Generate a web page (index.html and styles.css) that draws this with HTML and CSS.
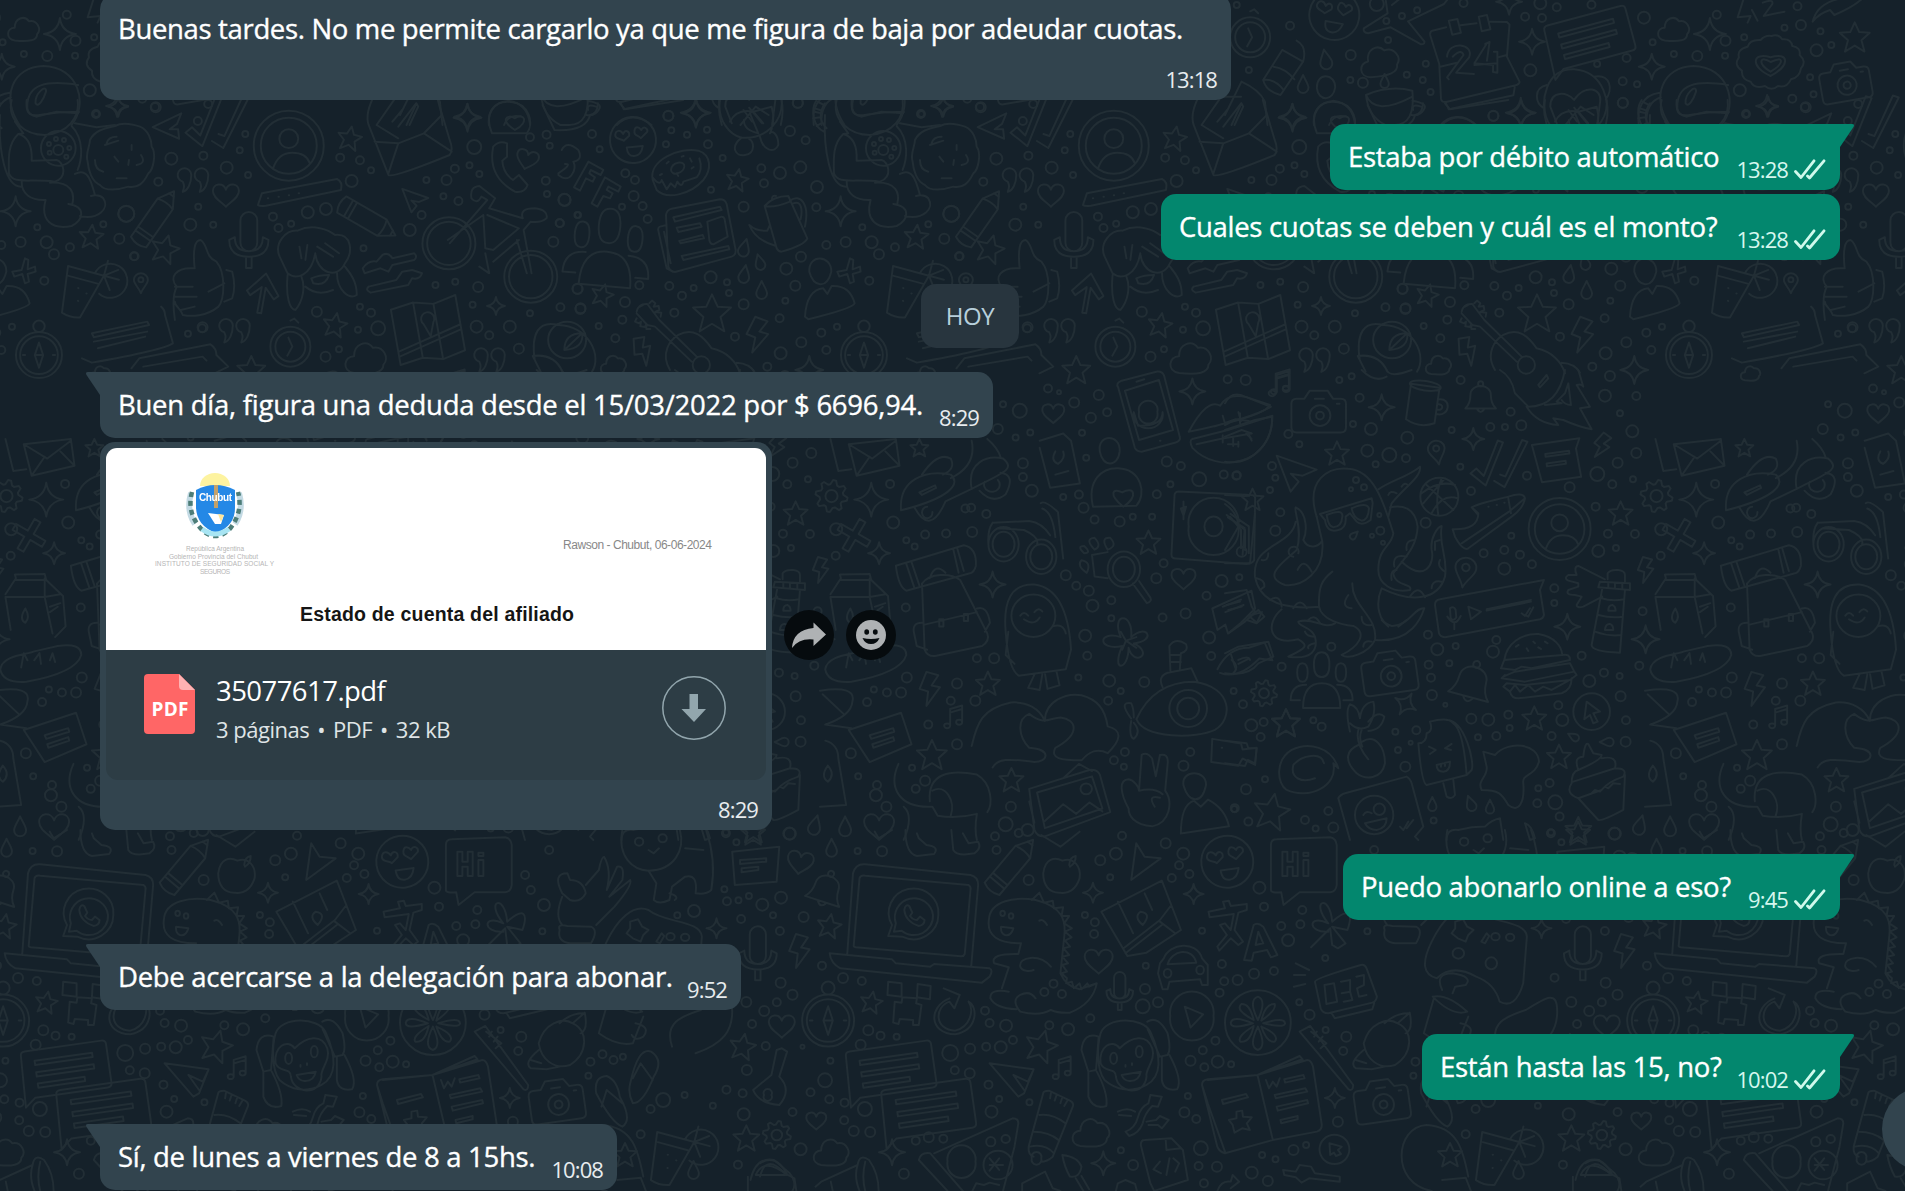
FILE: index.html
```html
<!DOCTYPE html>
<html lang="es">
<head>
<meta charset="utf-8">
<title>Chat</title>
<link rel="stylesheet" href="styles.css">
</head>
<body>
<svg class="wallpaper" id="wallpaper" viewBox="0 0 1905 1191" aria-hidden="true"></svg>
<svg class="defs" aria-hidden="true">
  <symbol id="checks" viewBox="0 0 32 21"><path d="M1.5 12.5 7 18.5 20 1.8M13.5 17 15.5 19 30 1.8" fill="none" stroke="currentColor" stroke-width="2.8" stroke-linecap="round" stroke-linejoin="round"/></symbol>
  <symbol id="tail" viewBox="0 0 14 23"><path d="M14 0H2Q-1 0 .5 3L14 23z" fill="currentColor"/></symbol>
</svg>
<main class="chat">
  <div class="bubble in first w1"><p class="text">Buenas tardes. No me permite cargarlo ya que me figura de baja por adeudar cuotas.</p><span class="time">13:18</span></div>
  <div class="bubble out start w2"><svg class="tail"><use href="#tail"/></svg><p class="text">Estaba por débito automático</p><span class="time">13:28</span><svg class="checks"><use href="#checks"/></svg></div>
  <div class="bubble out w3"><p class="text">Cuales cuotas se deben y cuál es el monto?</p><span class="time">13:28</span><svg class="checks"><use href="#checks"/></svg></div>
  <div class="day">HOY</div>
  <div class="bubble in start w4"><svg class="tail"><use href="#tail"/></svg><p class="text">Buen día, figura una deduda desde el 15/03/2022 por $ 6696,94.</p><span class="time">8:29</span></div>
  <div class="doc-row">
    <article class="doc">
      <svg class="preview" viewBox="0 0 660 202">
        <g class="emblem" transform="translate(109 60)">
          <path d="M-15-22a15 13 0 0 1 30 0z" fill="#fdf3a0"/>
          <path d="M-24-15q-5 18 4 31M24-15q5 18-4 31" fill="none" stroke="#c3dae4" stroke-width="6"/>
          <path d="M-23-16q-5 18 6 33 8 11 17 11 10 0 17-10 11-16 6-34" fill="none" stroke="#4d7d78" stroke-width="4.500" stroke-dasharray="5 4"/>
          <path d="M-19-18Q0-28 20-18V0Q20 18 1 25-18 18-19 0z" fill="#2488e6"/>
          <path d="M-13 21Q0 31 14 21" fill="none" stroke="#a8e5f3" stroke-width="5"/>
          <path d="M1-23V0" stroke="#c2a16b" stroke-width="4"/>
          <text x="-16" y="-7" class="crest" textLength="33">Chubut</text>
          <path d="M-7 5 9 7 6 16H0z" fill="#fff"/><path d="m3 6 6 1-3 7z" fill="#ffe69a"/>
        </g>
        <g class="tiny">
          <text x="80" y="103" textLength="58">República Argentina</text>
          <text x="63" y="111" textLength="89">Gobierno Provincia del Chubut</text>
          <text x="49" y="118" textLength="119">INSTITUTO DE SEGURIDAD SOCIAL Y</text>
          <text x="94" y="126" textLength="30">SEGUROS</text>
        </g>
        <text x="457" y="101" class="place" textLength="149">Rawson - Chubut, 06-06-2024</text>
        <text x="194" y="173" class="heading" textLength="274">Estado de cuenta del afiliado</text>
      </svg>
      <div class="file">
        <svg class="pdf" viewBox="0 0 51 60"><path d="M4 0H35L51 16V56q0 4-4 4H4q-4 0-4-4V4q0-4 4-4z" fill="#ff6666"/><path d="M35 0 51 16H39q-4 0-4-4z" fill="#ffb2b2"/><text x="7.5" y="41.5" textLength="37">PDF</text></svg>
        <div class="names"><div class="name">35077617.pdf</div><div class="meta"><span>3 páginas</span><span>•</span><span>PDF</span><span>•</span><span>32 kB</span></div></div>
        <svg class="download" viewBox="0 0 64 64"><circle cx="32" cy="32" r="31.2" fill="none" stroke="#92a6ad" stroke-width="1.5"/><path d="M27.5 18H36V33H44L32 46 19.5 33H27.5z" fill="#92a6ad"/></svg>
      </div>
      <span class="time">8:29</span>
    </article>
    <svg class="action" viewBox="0 0 50 50"><circle cx="25" cy="25" r="25" fill="#060b0e"/><path d="M29.5 12.5 42 24.5 29.5 36V29.5Q15 28 8 38 9 20 29.5 18z" fill="#afb2b4"/></svg>
    <svg class="action" viewBox="0 0 50 50"><circle cx="25" cy="25" r="25" fill="#060b0e"/><circle cx="25" cy="25" r="15" fill="#afb2b4"/><ellipse cx="20.7" cy="22" rx="2.4" ry="2.8" fill="#060b0e"/><ellipse cx="29.3" cy="22" rx="2.4" ry="2.8" fill="#060b0e"/><path d="M16.5 28Q25 30 33.5 28 31 34 25 34T16.5 28z" fill="#060b0e"/></svg>
  </div>
  <div class="bubble out start w5"><svg class="tail"><use href="#tail"/></svg><p class="text">Puedo abonarlo online a eso?</p><span class="time">9:45</span><svg class="checks"><use href="#checks"/></svg></div>
  <div class="bubble in start w6"><svg class="tail"><use href="#tail"/></svg><p class="text">Debe acercarse a la delegación para abonar.</p><span class="time">9:52</span></div>
  <div class="bubble out start w7"><svg class="tail"><use href="#tail"/></svg><p class="text">Están hasta las 15, no?</p><span class="time">10:02</span><svg class="checks"><use href="#checks"/></svg></div>
  <div class="bubble in start w8"><svg class="tail"><use href="#tail"/></svg><p class="text">Sí, de lunes a viernes de 8 a 15hs.</p><span class="time">10:08</span></div>
</main>
<div class="scroll-down"></div>
<script src="wallpaper.js"></script>
</body>
</html>
```
FILE: styles.css
```css
* { box-sizing: border-box; }
body { margin: 0; width: 1905px; height: 1191px; overflow: hidden; position: relative; background: #15212a; font-family: "Open Sans", "Noto Sans", sans-serif; color: #fff; }
.defs { position: absolute; width: 0; height: 0; }
.wallpaper { position: absolute; inset: 0; width: 1905px; height: 1191px; fill: none; stroke: #222e35; stroke-width: 2; stroke-linecap: round; stroke-linejoin: round; }
.wallpaper path, .wallpaper circle { vector-effect: non-scaling-stroke; }
.chat { position: relative; height: 1191px; overflow: hidden; display: flex; flex-direction: column; padding: 0 65px 0 100px; }
.bubble { position: relative; flex: none; height: 66px; display: flex; align-items: flex-start; border-radius: 15px; padding: 0 14px 0 18px; margin-top: 4px; }
.in { align-self: flex-start; background: #32444e; color: #32444e; }
.out { align-self: flex-end; background: #03876e; color: #03876e; }
.start { margin-top: 24px; }
.start.in { border-top-left-radius: 0; }
.start.out { border-top-right-radius: 0; }
.first { height: 106px; margin-top: -6px; }
.text { margin: 15px 0 0; flex: none; font-size: 27.5px; line-height: 36px; letter-spacing: -.3px; white-space: nowrap; color: #fff; -webkit-text-stroke: .35px #fff; }
.time { margin: 30px 0 0 auto; font-size: 22px; line-height: 30px; letter-spacing: -.9px; color: #e8ecee; white-space: nowrap; }
.out .time { color: #d6f7ee; }
.first .text { margin-top: 17px; }
.first .time { position: absolute; right: 14px; bottom: 6px; margin: 0; }
.checks { width: 32px; height: 21px; margin: 35px 0 0 6px; color: #cff9ec; }
.tail { position: absolute; top: 0; left: -14px; width: 14px; height: 23px; }
.out .tail { left: auto; right: -14px; transform: scaleX(-1); }
.w1 { width: 1131px; } .w2 { width: 510px; } .w3 { width: 679px; } .w4 { width: 893px; }
.w5 { width: 497px; } .w6 { width: 641px; } .w7 { width: 418px; } .w8 { width: 517px; }
.w1 .text { letter-spacing: -.34px; }
.w4 .text { letter-spacing: -.26px; }
.day { flex: none; align-self: center; width: 98px; height: 64px; margin-top: 24px; border-radius: 15px; background: #28353e; color: #b7cfdb; font-size: 24px; line-height: 64px; text-align: center; letter-spacing: -.4px; }
.doc-row { flex: none; display: flex; align-items: center; gap: 12px; margin-top: 4px; }
.doc { flex: none; width: 672px; height: 388px; padding: 6px; border-radius: 15px; background: #32444e; display: flex; flex-direction: column; }
.preview { flex: none; display: block; width: 660px; height: 202px; background: #fff; border-radius: 11px 11px 0 0; font-family: "Liberation Sans", sans-serif; }
.emblem { filter: blur(.6px); }
.crest { fill: #fff; font-size: 10px; font-weight: bold; }
.tiny { fill: #b5b5b5; font-size: 6.5px; }
.place { fill: #888; font-size: 12px; }
.heading { fill: #151515; font-size: 19.5px; font-weight: bold; }
.file { flex: none; height: 130px; display: flex; align-items: flex-start; background: #2d3d45; border-radius: 0 0 12px 12px; padding: 24px 40px 0 38px; }
.pdf { width: 51px; height: 60px; margin-right: 21px; }
.pdf text { fill: #fff; font: bold 19px "Open Sans", sans-serif; }
.name { font-size: 27.5px; line-height: 34px; letter-spacing: -.55px; white-space: nowrap; }
.meta { display: flex; gap: 8px; font-size: 22px; line-height: 30px; letter-spacing: -.5px; margin-top: 6px; color: #dfe4e6; white-space: nowrap; }
.download { width: 64px; height: 64px; margin: 2px 0 0 auto; }
.doc .time { margin: 14px 8px 0 auto; line-height: 30px; }
.action { flex: none; width: 50px; height: 50px; margin-top: -2px; }
.scroll-down { position: absolute; left: 1882px; top: 1087px; width: 84px; height: 84px; border-radius: 50%; background: #32444e; }
```
FILE: wallpaper.js
```js
// The wallpaper is one 825px wide tile of line doodles, repeated across the chat.
// Each region has an origin, a scale, free-form paths and "name x y size angle" stamps.
const stamps = {
  star: 'M0-1 .3-.35 1-.3 .45.2 .65.95 0 .55-.65.95-.45.2-1-.3-.3-.35z',
  spark: 'M0-1Q.12-.12 1 0 .12.12 0 1-.12.12-1 0-.12-.12 0-1z',
  heart: 'M0 .9C-.4.5-1 .2-1-.3-1-.9-.2-1 0-.4.2-1 1-.9 1-.3 1 .2.4.5 0 .9z',
  drop: 'M0-1C.2-.5.6 0 .6.4a.6.6 0 0 1-1.200 0C-.6 0-.2-.5 0-1z',
  bolt: 'M-.2-1 .5-.8 .1-.2 .6-.1-.2 1-.1.15-.6 0z',
  cloud: 'M-.6.7C-1.200.6-1.100-.1-.6-.1-.6-.7 0-.9.3-.5.8-.6 1.100 0 .8.3.8.700.3.8-.6.7z',
  camera: 'M-.9-.5h.3l.2-.3h.7l.2.3h.3q.2 0 .2.2v.9q0 .2-.2.2h-1.700q-.2 0-.2-.2v-.9q0-.2.2-.2zM.4.15a.4.4 0 1 1-.8 0 .4.4 0 1 1 .8 0zM.15.15a.15.15 0 1 1-.3 0 .15.15 0 1 1 .3 0zM-.2-.5H.15M.65-.3h.1',
  people: 'M-.6.8Q-.6 0 0 0T.6.8zM.25-.6q0 .4-.25.4t-.25-.4T0-1t.25.4zM-.45-.35q0 .3-.17.3t-.17-.3.17-.3.17.3zM.79-.35q0 .3-.17.3t-.17-.3.17-.3.17.3zM-.5.05q-.5 0-.5.5h.3M.5.05q.5 0 .5.500h-.3',
  user: 'M1 0A1 1 0 1 1-1 0 1 1 0 1 1 1 0zM.8 0A.8.8 0 1 1-.8 0 .8.8 0 1 1 .8 0zM.27-.2a.27.27 0 1 1-.54 0 .27.27 0 1 1 .54 0zM-.45.65Q-.3.2.1.200T.6.5',
  love: 'M1 0A1 1 0 1 1-1 0 1 1 0 1 1 1 0zM-.3.3H.4Q.3.7 0 .7T-.3.3zM-.4 0C-.5-.1-.8-.1-.75-.3S-.5-.5-.4-.3C-.3-.5-.1-.4-.15-.2zM.35-.05C.2-.2.05-.2.1-.4S.3-.55.4-.4C.5-.6.7-.45.65-.3z',
  compass: 'M1 .15A1 1 0 1 1-1 .15 1 1 0 1 1 1 .15zM.82.15a.82.82 0 1 1-1.640 0 .82.82 0 1 1 1.640 0zM0-.4.18.15 0 .7-.18.15zM-.18.15H.18M-.7.15h.1M.6.15h.1M.25-1.100a.25.25 0 1 1-.5 0 .25.25 0 1 1 .5 0z',
  watch: 'M1 0A1 1 0 1 1-1 0 1 1 0 1 1 1 0zM.75 0A.75.75 0 1 1-.75 0 .75.75 0 1 1 .75 0zM-.1-.45.1 0-.15.45M0-1.300l.2-.1.2.2',
  chat: 'M-.9-.5H.9q.1 0 .1.1V.5q0 .1-.1.1H-.8L-1.050.8-1-.4q0-.1.1-.1zM-.7-.25H.65v.1H-.7zM-.7.02H.65v.1H-.7zM-.7.28H.4v.1H-.7z',
  note: 'M-1-.8H1L.8-.4.85.8H-.8zM-.5-.35H.5v.12H-.5zM-.5.05H.3v.12H-.5z',
  pencil: 'M-1-.3H.5L1 0 .5.300H-1q-.15-.3 0-.6zM-.75-.3V.3M-.6-.3V.3M.5-.3Q.6 0 .5.3M.85-.1V.1',
  plane: 'M-1-.8 1-.1 .3.200-.3.100 .1.500-.3 1z',
  music: 'M-.4.700V-.7L.6-1V.4M-.4-.4.6-.7M-.4.7a.25.2 0 1 1-.5 0 .25.200 0 1 1 .5 0zM.6.4a.25.2 0 1 1-.5 0 .25.2 0 1 1 .5 0z',
  pin: 'M0 1C-.2.4-.7.1-.7-.35a.7.65 0 0 1 1.400 0C.7.1.2.4 0 1zM.25-.35a.25.25 0 1 1-.5 0 .25.25 0 1 1 .5 0z',
  ticks: 'M-1 .4-.8.200-.5.45-.1-.9.1-.85-.4.8zM.1.35.3.4.8-1 1-.95.3.8-.1.6',
  mic: 'M-.3-.7a.3.3 0 0 1 .6 0V.100a.3.3 0 0 1-.6 0zM-.7 0Q-.7.6 0 .6T.7 0L.5-.1Q.5.400 0 .4T-.5-.1zM-.1.6V1H.1V.6',
  bell: 'M-.9.6Q-.6.300-.6-.2C-.6-.9.6-.9.6-.2Q.6.300.9.6zM-.2.65q.2.3.4 0M.15-.85a.15.15 0 1 1-.3 0 .15.15 0 1 1 .3 0z',
  quotes: 'M-.2-.3c0 .5-.2.9-.5 1 .1-.3.1-.4 0-.6a.4.4 0 1 1 .5-.4zM.8-.3c0 .5-.2.9-.5 1 .1-.3.1-.4 0-.6a.4.4 0 1 1 .5-.4z',
  plus: 'M-.2-1H.2V-.2H1V.2H.2V1H-.2V.2H-1V-.2H-.2z',
  arrow: 'M-.1 1V-.3L-.6.200-.8 0 0-1 .8 0 .6.2.1-.3V1z',
  cocktail: 'M-.7-.5H.5L.1 1Q-.2 1.100-.5 1zM-.6-.2H.4M.2-.5a.55.55 0 1 1 .3.6M.5-.5V-1M.5-.5 .9-.8M.5-.5H1M.5-.5 .8-.1M-.2.1h.01M.1.200h.01M-.1.5h.01',
  map: 'M-1-.8-.3-.9.3-.75 1-.9V.8L.3.95-.3.8-1 .9zM-.3-.9V.8M.3-.75V.9M-1 .5 1 0M-1 .65 1 .15M.2-.2a.2.2 0 1 0-.3 0l.15.4z',
  mug: 'M-.7-.8H.5V.7Q-.1 1-.7.7zM-.75-.8a.65.2 0 1 1 1.300 0 .65.200 0 1 1-1.300 0M.5-.3C1.100-.5 1.100.4.5.3M.5-.1C.8-.2.8.2.5.1'
};
// Gear: eight teeth round a hub.
const rim = [];
for (let t = 0; t < 32; t++) {
  const r = t % 4 < 2 ? 1 : .74, a = (t + .5) * Math.PI / 16;
  rim.push((r * Math.cos(a)).toFixed(2) + ' ' + (r * Math.sin(a)).toFixed(2));
}
stamps.gear = 'M' + rim.join('L') + 'zM.38 0a.38.38 0 1 1-.76 0 .38.38 0 1 1 .76 0z';

const regions = [
  // calendar, speech bubble, monkey, astronaut helmet
  { o: [400, 0], s: [.4337, .3333],
    p: ['M478 92 510 82M543 76 580 70M612 65 650 66 656 74 650 170 679 245Q680 252 670 256L510 306Q499 308 498 296L494 192 473 105Q472 95 478 92M496 200 535 188M630 172 650 165M508 306 516 328 665 286 668 262M516 62 536 57 544 98 524 104zM585 50 604 45 612 88 592 94z',
        'M512 170C515 120 575 130 563 172L533 218 574 222M516 238 512 232 550 165Q545 145 525 170M604 130 575 190 618 195M600 132 610 126 604 182M620 155 628 155 628 218 618 216 618 192M575 195 628 190',
        'M320 85 375 40 370-5M420-5 515-5 505 12 422 64 460 125Q460 135 450 132L382 82 330 100Q318 98 320 85M385 15 407-8',
        'M132 150 180 185Q190 140 165 122M132 150 88 240Q95 275 128 285L180 185M88 240Q115 235 135 270M112 200Q140 205 160 238',
        'M325 285Q380 255 432 272 440 375 390 375H370Q330 350 325 285Q345 350 432 290M432 302Q470 310 458 330 448 350 430 345',
        'M742 375C725 300 740 205 805 208 875 215 890 310 878 375M765 370 750 320C750 270 790 275 805 300 830 250 870 265 865 305L858 375M850 230C890 220 895 270 878 298M742 255C710 265 715 310 736 325M785 375 820 320 850 345M792 330 812 365M805 323 835 370',
        'M1025 375C980 290 1010 200 1080 198 1160 200 1185 310 1145 375M1043 325C1040 250 1090 240 1160 255M1160 340 1110 335 1065 350Q1045 345 1043 325M1062 310C1060 280 1088 250 1086 275 1080 300 1068 325 1062 310M1002 278C960 285 950 330 954 375M1005 292C975 305 970 340 972 375M962 305 978 315M955 335 972 340',
        'M1260 108Q1275 100 1285 118 1305 115 1308 138 1328 142 1325 165 1342 185 1328 205 1325 232 1305 238 1295 265 1275 258 1260 275 1245 258 1220 268 1212 245 1190 238 1192 212 1172 195 1185 172 1180 148 1205 140 1210 118 1235 120 1245 105 1260 108M1258 228C1210 200 1215 155 1258 172 1300 155 1305 195 1258 228M1258 215C1225 190 1235 165 1258 186 1290 165 1290 190 1258 215',
        'M1195 0 1182 52 1212 48 1205 68M1215 30 1228 62M1240 8Q1265-5 1262 12L1242 48 1290 35M1355 65Q1365 10 1420-5M1355 65Q1370 40 1395 30L1405 45Q1450 20 1470-5',
        'M0 345 38 245Q80 270 92 305L98 375M15 375 38 310 42 320 22 375M205 375Q200 310 250 302 295 310 300 375M240 375Q250 340 280 350M500 375Q535 330 580 375M212 265C210 215 255 220 254 262 250 305 215 305 212 265'],
    i: 'o 27 15 3;o 150 77 4;o 350 12 7;o 408 48 3;o 372 63 3;o 443 31 3;o 376 120 3;o 55 210 3;o 290 165 5;o 463 191 3;o 419 224 3;o 289 240 3;o 318 248 5;o 456 240 3;o 474 276 3;o 550 9 4;o 692 50 4;o 731 54 4;o 765 22 4;o 727 10 6;o 845 14 4;o 966 53 6;o 986 127 3;o 926 174 4;o 858 192 3;o 704 211 6;o 917 244 4;o 950 253 3;o 917 309 5;o 619 347 5;o 1035 162 3;o 1089 168 5;o 1154 122 5;o 1197 112 3;o 1153 167 3;o 1134 44 4;o 1187 271 6;o 1320 19 4;o 1328 75 5;o 1290 83 3;o 1373 94 3;o 1398 135 3;o 1364 151 6;o 1349 232 3;o 1357 283 3;o 1308 296 4;o 1339 322 5;o 1202 342 3;o 1460 312 4;love 252 45 25 10;watch 58 112 20;drop 232 178 10 -10;drop 180 252 9;drop 368 243 7;cloud 358 184 20 -10;cloud 1036 88 16;spark 708 125 13;spark 984 200 13;spark 1118 102 16;spark 155 350 13;spark 682 338 15;spark 655 5 13;spark 1250 318 11;star 1452 112 15;chat 840 108 42 -15;camera 1433 245 24 -10' },
  // donut, newspaper, watering can, guitar, astronaut, cookie
  { o: [560, 90], s: [.3333, .3333],
    p: ['M278 270C265 210 360 170 415 182 455 195 455 240 430 270 390 315 320 330 290 300zM278 262Q300 290 305 270L320 298 332 280 345 292 352 275Q365 295 370 275L410 262Q430 240 418 205M333 240C335 215 375 210 373 230 370 250 335 260 333 240M300 255 306 252M320 220 326 215M365 200 371 198M390 205 395 215M395 235 401 231M350 250 355 258',
        'M318 375Q320 360 335 356L480 328Q495 328 500 342L527 480Q528 495 515 500L345 546Q330 545 325 530zM320 405 300 410Q293 412 295 422L320 535 338 545M312 425 332 520M340 382 480 350 485 360 345 395zM350 413 420 400 425 410 355 426zM358 453 428 435 432 445 362 460zM365 498 505 468 508 478 370 510zM442 395 485 380Q492 380 494 388L503 440 460 463Q450 462 448 450z',
        'M614 348Q640 318 685 318L742 445Q735 465 665 485 655 485 650 475zM614 348Q640 355 690 335M636 328Q636 315 648 318M630 405 622 422Q590 425 568 405 585 450 648 468M690 332C720 310 750 340 735 410M700 340C725 330 728 360 722 388',
        'M230 665Q235 640 262 642L298 690 410 800M230 670 262 705 285 710 395 815M250 645 240 650M268 640l8-8 10 8-5 10 15-2 2 12-12 6 18 2-2 12M230 685l-5 10 12 5 6-5-2 14 14 2 4-8 0 14 12 0M330 840C300 790 330 750 355 735 400 710 430 740 455 775 500 785 530 815 540 850M450 825A26 26 0 1 1 398 825 26 26 0 1 1 450 825M530 818Q570 820 585 848',
        'M795 75C790 180 810 290 858 290M830 30C815 90 870 135 930 135 1000 130 1035 80 1028 30M875 30C870 90 900 75 935 72 970 65 1000 65 1032 66M770 30C750 60 760 110 792 125M795 40C775 70 780 95 800 115M765 55 780 60M760 85 780 82M770 108 788 98M840 95 865 130 850 132C820 160 820 200 822 250 835 285 880 265 960 275 1000 260 985 215 965 210L890 212C892 170 880 140 850 132M860 275C860 310 885 332 932 330 915 390 950 420 1010 408 1045 390 1055 350 1000 342M945 278C1010 275 1020 310 1012 342M1035 378C1090 390 1125 355 1105 325 1095 315 1080 315 1068 318M1020 252C1060 230 1070 280 1080 315M1010 108C1050 150 1040 210 1028 240M1020 100 1085 112 1140 105M1022 175A52 52 0 1 1 918 175 52 52 0 1 1 1022 175M985 180A15 15 0 1 1 955 180 15 15 0 1 1 985 180',
        'M1058 215C1050 190 1065 170 1065 150 1080 120 1110 115 1140 108 1165 95 1200 105 1215 110 1240 120 1250 150 1250 170 1265 190 1255 240 1240 250 1225 280 1210 295 1180 290 1150 300 1110 305 1095 285 1070 275 1060 240 1058 215M1115 160Q1120 140 1145 140M1110 165 1150 152M1080 210Q1080 240 1105 245M1205 225Q1235 220 1218 195M1145 265H1175M1190 165V180M1182 210 1180 225M1138 200 1150 215',
        'M5 180Q20 150 55 180 70 210 40 215 50 235 35 255 20 275-5 255M-5 250Q40 220 15 222M85 215 130 240 122 255 92 240 88 250 105 262 98 275 78 265 60 302 42 292zM135 262 182 290 175 305 145 290 140 300 158 310 150 325 130 318 112 350 95 340z',
        'M748 545C745 490 815 495 814 545 800 600 760 590 748 545M735 680Q740 600 790 595L802 612 815 588Q870 585 884 640 880 655 745 688zM870 505 880 510 878 538 900 530 902 545 878 552 882 575 870 580 862 552 838 560 832 545 860 540z',
        'M480 30C470 90 510 135 545 143 620 150 670 90 665 30M510 95Q530 55 580 65L635 50 640 75Q640 110 630 130M580 65 610 100M570 70 595 130Q550 120 552 90M545 143C510 170 525 200 555 195 590 190 580 150 568 148M600 140C610 185 645 190 655 165 655 130 635 120 630 130M180 40 195 58 370 30'],
    i: 'love 219 150 23 -5;o 96 132 4;o 119 178 3;o 325 78 5;o 334 121 3;o 381 134 3;o 318 163 3;o 441 119 3;o 444 163 4;o 488 204 3;o 453 299 3;o 196 250 4;o 225 270 4;o 221 318 5;o 186 350 3;o 248 348 4;o 263 387 4;o 54 375 3;o 14 330 6;o 0 400 4;o 604 235 4;o 660 249 6;o 612 280 4;o 721 232 6;o 771 291 6;o 551 350 5;o 769 352 4;o 714 38 5;o 690 123 5;o 737 151 4;o 907 412 3;o 857 456 5;o 935 457 6;o 799 465 4;o 957 493 5;o 1005 472 4;o 1105 403 3;o 1174 371 8;o 1153 446 5;o 1197 499 4;o 723 500 5;o 679 536 6;o 706 587 5;o 928 572 4;o 676 632 3;o 659 685 4;o 551 643 5;o 507 609 3;o 501 577 3;o 452 562 6;o 401 594 3;o 366 617 4;o 328 588 4;o 343 668 4;o 238 586 4;o 195 636 5;o 187 689 4;o 53 597 5;o 61 657 5;o 116 708 3;o 166 745 4;o 525 740 4;o 622 830 4;o 662 790 6;o 724 757 5;o 784 728 4;o 831 710 3;o 799 780 4;o 1083 72 4;o 963 147 2;o 987 150 2;o 1003 174 2;o 994 200 2;o 944 188 2;o 942 162 2;spark 408 70 14;spark 842 364 15;spark 1150 50 10;spark 748 840 14;star 532 270 11 10;star 1069 440 12 5;star 127 615 11 15;star 456 670 19;people 142 485 43 5;drop 553 473 9 15;drop 599 516 8 -15;drop 553 552 9 10;drop 605 600 9;bolt 248 783 15 -25;bolt 592 735 18 5;cocktail 1050 590 31 15;compass 912 785 23;cloud 162 825 13;cloud 1098 850 10' },
  // envelope, heads, bicycle, monkey, thumbs up, map
  { o: [80, 0], s: [.3954, .3333],
    p: ['M745 285Q720 340 730 375L780 525Q790 535 935 465 945 450 935 420L905 300M745 425 805 430 870 400 940 455M805 430 780 520M750 375 800 290 850 290M870 400 915 345 905 300M750 375 805 415M790 365 815 330M805 380 850 310',
        'M1042 400C1020 340 1050 300 1090 306 1135 310 1150 370 1130 400zM1100 390C1060 360 1080 340 1100 355 1120 335 1140 365 1100 390M1170 315 1200 390Q1280 395 1290 345 1310 340 1310 310M1285 330Q1280 310 1305 320',
        'M1045 440Q1060 420 1080 430L1080 470 1068 482Q1070 520 1095 540L1110 525 1132 555Q1125 580 1100 575 1030 530 1045 440',
        'M1000 730A67 78 0 1 1 866 730 67 78 0 1 1 1000 730M988 730A55 65 0 1 1 878 730 55 65 0 1 1 988 730M1207 830A67 78 0 1 1 1073 830 67 78 0 1 1 1207 830M1195 830A55 65 0 1 1 1085 830 55 65 0 1 1 1195 830M935 730 1030 600 1015 590Q1005 615 990 595 985 560 1010 558L1050 595 1035 625 1120 655Q1110 625 1150 625 1185 630 1180 655 1165 670 1140 665L1122 690 1142 820M1030 645 1110 685 1045 750 1025 745 1020 645 930 720M1110 720 1045 785M1105 720 1130 820M1010 800 1035 820 1025 760',
        'M240 960C235 920 235 880 245 860 225 835 240 800 290 805 285 750 290 720 305 720 325 735 315 770 345 785 370 820 365 900 350 920 320 950 280 950 260 945 255 925 240 920 240 905M240 860H285M240 890H295M255 930 290 920M370 810 385 815Q395 860 385 895L365 905M325 875 365 850',
        'M505 770C490 730 520 690 550 692 590 670 630 690 645 705 690 700 690 760 670 790 650 840 600 820 595 760 585 830 545 840 525 820zM555 740 560 775M575 735 570 780M600 740 640 770M620 730 655 760M525 825C520 890 530 930 545 930 565 900 570 860 560 830M650 820C650 870 680 900 700 885 700 840 680 815 670 800M585 835Q605 825 630 825 620 860 590 850zM570 860Q600 890 640 870',
        'M450 615 460 580 650 537Q665 545 660 570L470 617Q455 620 450 615M475 595h1M502 590h1M528 586h1M553 580h1',
        'M715 805Q730 780 750 785L765 765Q780 755 790 775L845 760Q855 770 845 780L790 795 780 815 760 805 720 820zM730 860 800 840 815 815 840 810 865 820Q860 840 840 835L830 855 735 878Q720 870 730 860',
        'M205 920Q215 930 215 945L235 1030Q210 1050 30 1088L5 1075M30 1000 170 965 175 975 35 1012zM35 1025 170 995M45 1045 165 1010M130 1105 150 1075 330 1033Q345 1045 345 1065L375 1100 340 1120M160 1100 310 1070 320 1082',
        'M1150 1080C1140 1000 1160 960 1210 975 1290 980 1320 1070 1295 1115M1145 1068Q1200 1060 1220 1115M1145 1068 1165 1115M1280 1020A48 55 0 1 1 1184 1020 48 55 0 1 1 1280 1020M1225 1050Q1225 1000 1270 1000 1275 1045 1225 1050L1270 1000'],
    i: 'user 528 437 35;plane 232 375 15 -45;ticks 345 370 30 5;quotes 290 540 17;heart 369 585 13;pencil 193 650 31 -55;pencil 730 660 31 30;mic 427 720 28;plane 848 598 13;arrow 462 880 20 10;star 682 415 12 10;star 215 747 14 15;star 645 975 12 10;spark 980 353 14;spark 1052 918 9;watch 532 1040 20;cloud 725 1075 21;quotes 395 992 17;quotes 1040 1080 17;map 880 990 33 -10;heart 1131 478 11 15;o 190 321 4;o 298 363 4;o 418 402 3;o 312 467 4;o 404 451 3;o 231 476 6;o 371 503 6;o 425 525 3;o 198 545 4;o 299 620 3;o 117 642 8;o 279 674 6;o 337 674 3;o 488 650 4;o 534 671 3;o 502 684 4;o 576 637 6;o 622 627 6;o 687 543 6;o 658 473 4;o 708 481 4;o 736 511 3;o 876 540 3;o 927 540 5;o 985 496 3;o 948 506 4;o 1010 522 3;o 997 441 7;o 1138 412 4;o 1180 404 4;o 1188 437 3;o 1178 542 4;o 1181 582 3;o 1225 599 6;o 919 589 3;o 957 603 4;o 864 645 4;o 834 690 6;o 717 745 3;o 138 769 4;o 899 855 3;o 949 845 3;o 1007 861 5;o 1258 645 3;o 1213 669 4;o 1197 725 5;o 1258 866 5;o 1215 922 4;o 1266 925 5;o 993 914 3;o 1138 940 3;o 708 920 3;o 736 938 4;o 599 935 5;o 754 985 7;o 703 989 3;o 1003 980 6;o 1087 980 6;o 1035 1006 4;o 1110 1046 5;o 621 1070 5;o 655 1048 3;o 273 1001 3;o 310 982 5;pin 154 850 10' },
  // phone, lips, record player, backpack, hands, submarine
  { o: [-5, 280], s: [.523, .3571],
    p: ['M570 300Q565 290 575 283L645 256Q655 255 658 268L688 440Q690 450 680 455L615 481Q605 480 602 470zM583 310 648 280 675 420 610 448zM605 285 620 278M650 450h1M655 370A28 38 0 1 1 600 370L608 408Q655 410 655 370M645 370A18 26 0 1 1 610 370 18 26 0 1 1 645 370',
        'M705 425Q740 330 765 352 780 315 815 328L862 355Q820 390 705 425M712 445 780 420 865 380C865 520 760 545 712 470Q705 450 712 445M720 460 765 445 825 430M770 380 775 405M800 370 805 395M790 440V465M770 435V455M815 430 825 445M755 410 795 390 820 395M780 460H800',
        'M685 592 825 602Q832 602 832 612L830 785Q825 795 815 795L680 780Q672 780 672 768L678 600Q680 592 685 592M800 690A48 70 0 1 1 705 690 48 70 0 1 1 800 690M770 690A17 27 0 1 1 735 690 17 27 0 1 1 770 690M780 665 812 695 808 770M785 655 820 690V765M695 620V670M690 640 695 660 700 635z',
        'M420 450 465 430 480 450 497 570 440 582 420 470M450 480Q440 505 455 515 470 500 465 480M450 545 475 535M535 480C530 430 575 430 573 480 570 525 540 525 535 480M522 635C510 560 540 525 570 527 615 530 625 600 605 632zM580 635C550 600 560 580 578 595 600 575 610 605 580 635',
        'M145 800 275 743Q300 750 298 800 295 820 285 822L165 870Q150 860 145 800M165 795 180 860M175 790 190 855M255 755 265 820M262 750 275 815M210 835Q220 790 240 820M195 850C210 820 250 820 268 840L320 990Q325 1010 310 1025L220 1053Q205 1055 200 1035zM200 965 300 930M300 920Q320 910 325 960L315 985M195 960Q175 960 180 990L185 1025 205 1035M228 950h8v20h-8zM275 935h8v20h-8z',
        'M355 985C350 900 365 850 410 853 450 860 475 920 480 1035L470 1090 380 1108Q360 1090 355 985M450 940A41 58 0 1 1 366 940 41 58 0 1 1 450 940M383 940Q390 925 398 940M410 930Q418 915 425 928M390 950Q410 970 420 945M360 985 355 1050 372 1075M445 970Q465 960 470 990M410 1105 398 1142 420 1148 425 1105M430 1100 435 1145 458 1135 452 1095',
        'M330 680 400 675Q425 680 440 715M330 680Q320 700 322 740M340 695 390 700Q420 720 415 740M422 625Q430 615 455 650L465 780M425 640Q445 650 450 720M380 740A29 48 0 1 1 322 740 29 48 0 1 1 380 740M452 775A29 48 0 1 1 394 775 29 48 0 1 1 452 775M372 740A21 35 0 1 1 330 740 21 35 0 1 1 372 740M444 775A21 35 0 1 1 402 775 21 35 0 1 1 444 775',
        'M155 645C150 560 200 530 250 545 270 570 250 610 155 645M195 545Q225 480 250 500 260 530 235 545M190 595 220 575 222 582 195 602zM290 585C280 510 320 490 350 500 375 530 350 540 290 585M290 450Q300 520 250 555M320 445Q340 470 345 495M345 540Q375 545 355 600 330 630 305 590M180 635Q210 720 240 620L290 585M205 635A10 16 0 1 0 215 650M315 565A15 20 0 1 0 340 560M55 460 145 445 152 520 70 548zM55 460 100 500 145 450M70 548 95 495M152 520 125 480M20 445 35 535 60 530',
        'M612 810A31 50 0 1 1 550 810 31 50 0 1 1 612 810M602 810A21 35 0 1 1 560 810 21 35 0 1 1 602 810M598 850 625 905Q635 900 632 890L610 843M505 765Q490 745 505 745 520 765 505 765M525 755Q505 725 525 722 540 745 525 755M550 755Q535 720 555 722 570 745 550 755M510 820Q490 800 500 785 520 790 510 820M520 770 550 762M520 770 525 830 550 835M750 920 825 870 832 920 805 960 780 990 775 965 760 980zM770 915 805 895M775 930 810 910M820 940 845 930 835 960z',
        'M575 1000C555 930 600 930 595 1000 625 960 645 1010 600 1018 640 1045 600 1085 590 1030 590 1095 555 1100 578 1025 530 1040 530 980 575 1000M585 1010 575 985M585 1010 605 1000M585 1010 605 1030M585 1010 578 1035',
        'M290 1305C300 1240 310 1200 365 1183 395 1180 420 1200 430 1235 430 1180 470 1155 500 1163 530 1175 545 1200 550 1250 580 1260 575 1290 550 1325 530 1310 515 1320 500 1345 460 1345 440 1340 450 1310 500 1270 490 1230 460 1225 440 1225 430 1250 400 1215 375 1230 380 1280 400 1310 445 1315 435 1350 410 1350 360 1340 340 1340 330 1365 310 1350 290 1320zM358 1230Q380 1195 410 1215M435 1215Q460 1185 505 1220M433 1295C400 1260 425 1245 433 1265 450 1245 455 1270 433 1295',
        'M605 1230C630 1150 670 1125 715 1125 790 1140 790 1230 755 1260 720 1285 620 1285 605 1230M740 1200A36 52 0 1 1 668 1200 36 52 0 1 1 740 1200M725 1200A21 30 0 1 1 683 1200 21 30 0 1 1 725 1200M655 1140Q645 1110 665 1100L710 1087 722 1125M670 1095 668 1025Q680 1000 700 1020 705 1040 690 1045L688 1090M670 1050H690M670 1070H690M595 1228Q570 1180 595 1185 600 1200 600 1225M595 1235Q590 1280 600 1285 615 1265 600 1240M760 1090Q780 1030 820 1030L850 1015 865 1065 840 1060Q800 1120 765 1100M800 1075 820 1060M785 1045 795 1090',
        'M400 1425 515 1372Q530 1370 535 1385L555 1490 430 1558Q415 1560 410 1540zM415 1435 520 1390 540 1480 430 1535zM430 1515 465 1468 490 1495 515 1463 540 1488M520 1425A11 15 0 1 1 498 1425 11 15 0 1 1 520 1425M465 1395 495 1355 520 1375M400 1460 410 1520',
        'M590 1480C575 1440 570 1400 590 1398 600 1400 610 1420 610 1430L615 1330Q625 1320 635 1340L642 1390 650 1330Q665 1325 665 1350L660 1430C675 1460 670 1520 635 1530 600 1525 590 1500 590 1480M610 1430Q640 1420 655 1440M640 1475Q625 1440 650 1450M695 1415C690 1370 740 1370 738 1415 730 1470 705 1465 695 1415M690 1550Q690 1470 715 1458L728 1475 742 1455Q775 1480 782 1530zM750 1285 805 1298 808 1315 835 1310 832 1358 808 1340 800 1360 748 1350zM768 1310h1',
        'M20 880 40 835 38 825 95 823 98 840 130 885 135 970 115 1000M20 888H95L125 880M95 835 95 888 110 990M20 888 30 980M38 840 98 840M58 920Q45 950 58 960 68 945 58 920M105 915 125 905M105 930 120 915M10 1090C15 1050 60 1050 75 1040L120 1025Q165 1015 165 1050 155 1100 60 1125 15 1130 10 1090M50 1085 55 1045 62 1065M75 1065 85 1045 88 1075M105 1065 110 1045 115 1070',
        'M0 1150Q70 1135 62 1180 60 1220 10 1245L60 1255M5 1160 45 1215M55 1260 155 1212 175 1300 95 1350zM95 1275 140 1255 142 1265 98 1285zM100 1300 140 1280 142 1290 102 1310zM10 1290Q35 1300 35 1340L50 1470 0 1475M15 1360Q0 1390 15 1405 30 1385 15 1360',
        'M150 1355C130 1420 150 1480 215 1475L225 1500Q260 1510 300 1495M210 1460C205 1380 250 1370 300 1385 330 1410 330 1470 320 1490M215 1430C240 1410 260 1460 250 1500M160 1475Q180 1500 160 1568M300 1495Q295 1540 300 1568'],
    i: 'star 190 470 9;star 490 252 14;star 628 735 12;star 827 615 11;star 321 1130 12;star 214 1330 15;star 366 1400 12;star 891 1240 14;spark 712 312 13;spark 98 615 17;spark 113 765 11;spark 330 853 13;gear 22 605 16;music 882 290 14;music 258 1225 12;heart 446 373 11;heart 695 836 12;heart 113 1530 15;bolt 210 1145 17;plus 65 715 17 30;drop 48 1530 10;o 396 135 4;o 436 304 4;o 486 343 5;o 533 322 5;o 457 314 2;o 350 348 3;o 382 366 7;o 340 417 5;o 518 386 5;o 549 370 4;o 501 428 3;o 402 427 3;o 374 441 3;o 388 513 5;o 388 552 4;o 405 590 6;o 509 498 3;o 495 601 4;o 465 608 3;o 504 638 5;o 525 671 4;o 573 676 5;o 598 663 3;o 635 663 3;o 644 600 4;o 670 572 3;o 725 558 7;o 772 545 4;o 797 547 4;o 663 508 5;o 690 521 4;o 134 571 4;o 31 698 6;o 140 679 6;o 201 713 4;o 241 710 4;o 291 706 5;o 278 640 4;o 318 655 4;o 289 638 4;o 165 729 3;o 181 746 3;o 164 917 4;o 30 772 4;o 470 827 5;o 490 856 4;o 514 870 5;o 521 912 6;o 557 897 4;o 557 947 3;o 507 996 6;o 511 1052 4;o 494 1113 3;o 553 1122 6;o 620 1126 5;o 575 1151 3;o 551 1178 4;o 643 835 5;o 657 793 4;o 655 945 4;o 699 934 5;o 744 1001 6;o 748 1053 4;o 768 843 6;o 739 884 4;o 300 1059 4;o 333 1059 5;o 166 1113 5;o 262 1130 5;o 250 1178 4;o 297 1178 5;o 155 1155 5;o 128 1155 4;o 103 1147 3;o 90 1182 4;o 207 1245 4;o 262 1300 5;o 59 1325 5;o 176 1366 3;o 73 1390 3;o 201 1402 5;o 109 1414 4;o 183 1425 4;o 107 1443 6;o 127 1475 5;o 355 1524 7;o 365 1475 5;o 397 1540 6;o 562 1345 4;o 583 1322 4;o 581 1363 3;o 695 1360 5;o 708 1322 4;o 793 1479 4' },
  // octopus, burger, lighthouse, ice cream
  { o: [400, 370], s: [.3333, .3333],
    p: ['M275 440C240 330 310 290 370 296 450 300 480 410 505 490 500 530 460 530 460 600 460 640 500 670 555 660 565 640 510 650 505 610 530 570 575 540 578 470 570 410 530 405 495 412',
        'M275 440 292 515C300 610 230 650 180 645 110 620 170 580 215 540 235 480 205 420 212 412 250 430 245 490 235 510 250 540 280 530 290 515M212 455C200 530 80 520 90 620 105 700 180 720 282 710 280 650 290 630 322 605M282 710C290 750 350 765 385 768 430 790 400 830 350 855 370 870 430 850 450 810 460 740 380 710 382 640M170 718C120 760 130 830 220 808 260 830 230 840 190 860 260 870 280 840 270 800 260 770 220 770 220 755 260 740 300 780 330 760',
        'M460 358C500 330 550 320 585 290 590 320 540 350 500 400L490 440M530 575C600 640 630 580 620 540 615 500 640 470 650 468 640 530 670 560 660 620 640 690 560 700 470 655 450 700 460 760 500 768 550 770 570 710 598 715 590 740 560 820 450 810',
        'M285 432 440 385 443 400 437 450Q410 470 395 455L375 430 362 440Q365 475 340 480 305 490 300 450zM305 435Q355 415 352 440 350 470 325 472 310 470 305 435M380 415Q425 395 432 415 430 450 410 452 385 445 380 415M110 570Q130 575 130 550M95 625Q120 630 118 650L105 660M135 690Q165 670 170 710M205 715Q225 680 245 715M205 560A15 15 0 1 1 220 550M218 600Q235 560 260 605M545 540Q540 510 570 510M508 590Q500 550 545 560M500 630Q495 600 515 600M555 680Q580 640 600 682M620 655Q620 630 650 635M645 570Q635 590 660 605M630 540V515L645 510M380 715Q345 710 370 675M410 740Q410 770 440 765M415 830Q415 810 440 815M250 750Q270 730 285 760M240 785Q245 800 268 800M250 835Q245 825 270 820M470 750 490 770M520 770 545 750M490 375Q495 360 515 370M530 350Q540 335 548 345',
        'M700 380A57 57 0 1 1 586 380 57 57 0 1 1 700 380M605 345 685 420M590 370Q640 330 690 345M595 400Q620 370 660 325M620 430Q650 370 698 385M650 325Q630 370 640 435',
        'M740 412Q760 400 850 380 895 365 900 385 895 415 860 440L730 535Q715 545 690 500L683 478Q760 480 760 430zM710 520 852 425 900 385M740 412 760 435M850 385 858 430M790 410h1M815 405h1M838 398h1',
        'M630 705Q630 690 645 688L957 630 945 660 957 735Q955 745 945 748L660 802Q645 800 642 790zM730 710 768 725 738 748zM785 718 918 690M785 722 918 695M675 715q12-8 17 5l2 22q-10 14-17 2zM667 740Q690 775 707 738M688 762V778M890 730 900 738 915 715M900 735 910 740 925 712',
        'M838 870C845 820 890 790 940 792 990 800 1010 830 1012 855zM838 870 828 895 870 900 890 890 920 895 1035 870Q1035 850 1012 855M835 920 870 905 1035 880 1048 905 900 935 830 925 840 915M1048 905 1055 915 1035 930 900 945 845 940 835 950 855 965 870 945 885 965 910 945 930 965 955 950 980 960 1035 930M855 965Q860 985 880 985L1010 970Q1040 960 1040 925M873 830l8-5M925 815l5 5M960 815l8 5M905 835l5 8M940 832l8 5',
        'M1148 628V610Q1155 598 1180 600 1200 602 1200 615V635M1125 635 1215 640V660L1120 652zM1150 637V655M1170 640V655M1192 640V658M1132 655 1100 825Q1100 845 1185 848L1200 660M1130 685Q1160 695 1198 688M1120 735Q1160 745 1192 740M1110 785Q1150 800 1190 795M1150 722Q1150 705 1162 705 1172 710 1172 722zM1140 780Q1142 760 1155 762 1165 765 1165 780zM1140 628 1060 588Q1045 590 1055 615H1030Q1015 625 1030 632L1060 640V650L1030 660Q1020 675 1050 675L1070 680 1055 705Q1055 715 1075 710L1132 680',
        'M375 1085Q360 1020 375 1003 400 1010 405 1045 410 1000 445 995 455 1030 430 1070 400 1085 375 1060M430 1055Q460 1020 478 1040 470 1080 430 1083M400 1080Q390 1120 430 1168M410 1080Q400 1105 412 1130M412 1115C450 1090 480 1130 480 1180 470 1230 420 1230 395 1210 355 1170 365 1140 400 1125',
        'M340 1195C320 1130 250 1115 200 1140 150 1170 155 1240 185 1260 250 1290 340 1250 325 1180zM297 1180C290 1145 230 1155 205 1185 195 1225 230 1240 270 1225 300 1205 297 1180M225 1170 215 1130M280 1155 290 1128M205 1210 170 1225M250 1232 262 1270M290 1200 325 1195M190 1145 210 1170M310 1140 345 1108Q370 1105 360 1125L325 1160M235 1130V1100Q245 1090 252 1105L258 1130M165 1195 135 1185Q130 1165 170 1170M225 1270V1300Q235 1310 245 1300L250 1272M320 1205 350 1210Q355 1225 320 1222',
        'M615 1055Q670 1040 685 1060 715 1080 725 1215L605 1245Q590 1240 580 1120 605 1120 605 1090 625 1085 615 1055M665 1050C720 1050 750 1180 740 1200L725 1215M655 1240 665 1280Q680 1290 690 1275L685 1230M612 1130 632 1140 615 1152M680 1122 660 1135 678 1140M635 1185 675 1175Q675 1205 655 1205 635 1205 635 1185M648 1182V1190M660 1178V1188',
        'M775 1145 810 1155C850 1110 940 1120 942 1175 930 1220 890 1210 895 1240 900 1300 880 1330 850 1305 830 1270 820 1260 770 1260 755 1230 790 1220 785 1190z',
        'M1060 1285Q1020 1270 1040 1240 1040 1205 1060 1200 1045 1160 1075 1160 1080 1115 1090 1122L1105 1150 1130 1155Q1130 1170 1060 1200M1130 1165Q1180 1155 1170 1195L1045 1235M1170 1195Q1210 1195 1195 1220 1150 1235 1130 1260L1060 1285M1060 1285 1120 1350Q1130 1355 1195 1320L1200 1215M1100 1270 1110 1260 1125 1265 1140 1250 1150 1255 1165 1240 1185 1242',
        'M340 1285Q345 1275 360 1270L545 1220Q555 1225 560 1240L595 1370 570 1400 580 1410M340 1285 375 1410M505 1335A57 57 0 1 1 390 1335 57 57 0 1 1 505 1335M480 1318A17 17 0 1 1 446 1318 17 17 0 1 1 480 1318M415 1335Q425 1320 440 1330M420 1360 485 1345Q485 1375 455 1380 430 1380 420 1360M525 1370 535 1380 550 1355M545 1375 565 1350M665 1410Q665 1375 700 1380 740 1370 780 1370 800 1350 825 1345L835 1410M900 1360 915 1410 930 1405Q920 1365 900 1360',
        'M0 100Q20 60 60 80L135 105Q120 130 20 155L0 165M0 180 90 150 140 140C150 200 90 290 0 275M0 200 50 180 80 190M45 130V160M40 215V230M72 195 80 212M0 375 55 378M90 430 75 580 0 580M0 402Q40 430 40 470L0 540M5 435 60 480V540M15 440 48 480V535M65 545A15 15 0 1 1 35 545 15 15 0 1 1 65 545M825 0Q860 20 870 70L910 110Q1000 110 1020 0M940 45 965 15 970 25 945 52zM905 110Q935 160 1000 165L985 145 1015 150Q1060 170 1100 178L1065 115 1095 110 1055 45Q1070 40 1075 50L1060 0M960 105 1010 100 995 95 1020 70 1030 40 1038 105Q1020 105 1010 90',
        'M410 0Q450 40 485 20M485 0Q495 25 560 0M0 670 65 660 80 710 90 725 60 755 10 790M5 705 45 695M10 720 50 710M65 750 100 720 118 740 95 760zM0 850 40 830 130 815 145 860 100 880Q70 920 0 910M40 870Q70 855 75 870M20 870Q45 890 25 910M0 1112 65 1120 70 1135 95 1135 90 1180 68 1170 60 1188 0 1180M1155 1025A55 55 0 1 1 1045 1025 55 55 0 1 1 1155 1025M1085 995 1125 1025 1105 1030 1118 1055 1105 1060 1095 1035 1078 1048z'],
    i: 'camera 285 125 26;camera 497 907 26 -8;mug 600 105 24 8;bell 767 85 17;bell 740 940 23 15;spark 470 112 13;spark 745 207 11;spark 1027 770 13;spark 1262 808 14;spark 542 1002 12 30;star 336 250 12;star 1187 430 12;star 928 1045 12;star 1002 1160 12;star 1060 1380 13;star 183 1060 14;star 140 1325 18 10;plane 215 305 20;pin 636 248 12 -10;pin 720 608 15 10;ticks 820 285 27 5;note 1000 272 24 -8;bolt 1130 227 13 20;bolt 1262 600 13;user 1004 477 31;people 290 940 31;gear 117 970 13;music 170 40 12;drop 388 495 5 45;drop 622 1302 7;drop 737 1300 8 -20;drop 795 1310 7;drop 1145 1116 7 -90;drop 1045 1100 6 -60;drop 1245 1365 10 15;o 62 30 5;o 8 28 4;o 343 30 3;o 380 19 3;o 404 83 4;o 384 162 3;o 190 192 4;o 223 223 3;o 141 288 4;o 151 323 3;o 34 317 4;o 135 360 3;o 166 427 4;o 151 482 5;o 438 177 6;o 427 242 6;o 493 255 7;o 543 265 4;o 452 283 3;o 547 203 6;o 680 180 3;o 707 30 4;o 706 290 3;o 857 125 4;o 796 171 4;o 840 171 3;o 889 166 5;o 906 317 4;o 738 363 4;o 602 458 5;o 393 330 3;o 417 352 3;o 378 358 2;o 463 435 2;o 466 482 4;o 441 497 2;o 474 518 2;o 776 550 4;o 838 540 4;o 885 554 4;o 921 583 4;o 859 497 3;o 838 596 6;o 988 655 4;o 988 699 3;o 1034 352 5;o 1117 312 7;o 1162 343 4;o 1178 278 5;o 1222 184 6;o 1140 77 6;o 1155 18 5;o 1185 130 3;o 1234 78 4;o 1234 249 5;o 1224 328 3;o 1112 410 4;o 1149 491 4;o 1120 543 6;o 1173 534 3;o 1230 492 4;o 1253 724 4;o 43 622 3;o 319 830 4;o 170 890 4;o 609 794 4;o 637 838 6;o 692 828 3;o 804 845 6;o 814 810 4;o 611 884 4;o 673 880 3;o 618 923 4;o 621 975 5;o 661 1004 2;o 739 1046 5;o 790 1049 6;o 850 1034 4;o 854 1074 3;o 814 1098 4;o 759 1102 3;o 1012 1050 6;o 1000 1006 4;o 980 1098 4;o 1070 857 4;o 1093 933 6;o 1137 908 4;o 1184 918 3;o 1187 979 5;o 1243 887 4;o 1203 1051 4;o 1202 1115 5;o 26 963 3;o 54 1003 4;o 79 1066 6;o 116 1056 4;o 107 1101 4;o 120 1228 3;o 63 1258 5;o 265 1051 3;o 290 1070 4;o 511 1085 3;o 574 1081 4;o 557 1118 2;o 519 1140 3;o 541 1190 5;o 310 1323 4;o 240 1350 4;o 272 1376 3;o 325 1373 5;o 28 1317 3;o 70 1355 4;o 626 1352 3;o 974 1239 4;o 940 1255 3;o 937 1300 4;o 991 1297 7;o 1004 1340 4;o 978 1388 3;o 1168 1391 6' },
  // laptop, dinosaur, monkey, notebook, pizza
  { o: [-65, 830], s: [.3827, .3333],
    p: ['M228 372 243 130Q250 100 275 103L550 135Q570 140 570 165L552 408M245 345 260 145Q262 135 275 137L545 165Q552 170 550 180L535 372Q532 380 525 379L250 352Q243 350 245 345M182 370 345 388 355 400 445 410 455 402 600 415Q610 420 600 440L580 458 210 415Q185 400 182 370M466 255A65 73 0 0 1 372 320L335 318 345 285A65 73 0 1 1 466 255M452 255A50 57 0 0 1 370 302L350 305 355 280A50 57 0 1 1 452 255M377 240Q380 220 390 228L398 248 392 258Q400 270 410 270L418 260 430 270Q430 285 415 288 380 275 377 240',
        'M632 475 650 412 612 400Q600 370 675 372L682 340Q590 340 598 270C600 210 670 200 720 210 790 230 800 270 795 320L785 430Q800 470 835 478L880 460Q870 520 810 548 780 550 760 540 730 560 680 545 655 510 680 495 705 480 720 505M650 485Q600 475 602 505 615 535 670 538M630 290 662 295Q655 320 640 315 628 310 630 290M730 272Q740 265 750 285M760 410C730 370 675 380 680 410 685 425 705 425 715 420M640 250A6 8 0 1 1 628 250 6 8 0 1 1 640 250M662 258A6 8 0 1 1 650 258 6 8 0 1 1 662 258M710 210 730 188 742 218 765 212 768 235 792 232 788 258 808 258 795 280 815 295 797 305 814 322 797 332 810 350 793 355 808 375 790 380 805 400 790 405 802 425 788 430 802 445 800 460 815 455 820 475 835 460 840 478 855 460 860 470 880 460',
        'M740 130C745 85 770 80 790 92 820 80 840 110 835 145 825 180 805 192 785 188 755 190 740 165 740 130M808 105Q810 80 825 78 825 100 810 110M970 150 983 40 1005 80 1047 85zM892 245 1050 152 1100 300 1010 368 960 378zM935 215 975 310M1005 190 1025 240M950 355 1045 270 1075 225M955 370 1050 285M1045 275 1085 310M1000 285Q975 260 995 245 1025 250 1000 285',
        'M1172 245 1215 235 1210 215 1225 212 1230 228 1272 222V240L1250 248 1240 300 1262 335 1250 345 1230 325 1200 362 1195 350 1220 315 1202 285 1215 280 1230 300 1238 252 1175 262zM1265 390 1290 285Q1300 275 1315 290L1352 375 1335 382 1325 360 1290 368 1285 392zM1295 345 1302 305 1315 340z',
        'M1335 180V45Q1335 28 1350 28L1490 22Q1505 25 1507 45V165Q1505 185 1490 187H1410L1368 225 1362 187Q1335 190 1335 180M1365 65H1378V95H1392V65H1405V138H1392V110H1378V138H1365zM1420 90H1433V138H1420zM1420 68H1433V78H1420z',
        'M1055 385C1070 340 1140 330 1155 385L1170 405V465H1155L1150 448 1070 455 1065 478H1052L1040 430 1045 400zM1065 403C1075 360 1130 350 1140 398zM1075 430A10 13 0 1 1 1055 430 10 13 0 1 1 1075 430M1160 420A10 13 0 1 1 1140 420 10 13 0 1 1 1160 420',
        'M335 455 370 460V500L333 495zM412 462 446 468 444 508 410 502zM372 502 410 505 408 520 422 525 415 585H400V570L365 567 362 582 348 578 352 515 370 518zM480 475 522 495 508 535 495 515C455 530 455 600 510 602 550 590 560 540 545 515M495 505C440 530 440 610 510 613 570 600 570 530 545 515',
        'M1185 558A57 65 0 1 1 1072 558 57 65 0 1 1 1185 558M1110 530 1158 553 1125 593zM1387 578A86 97 0 1 1 1215 578 86 97 0 1 1 1387 578M1301 570Q1275 510 1301 500 1325 510 1301 570M1310 572Q1320 520 1345 522 1350 540 1310 572M1315 580Q1370 560 1372 580 1370 595 1315 580M1310 590Q1360 615 1345 635 1325 640 1310 590M1301 590Q1325 650 1301 660 1275 650 1301 590M1290 588Q1280 640 1255 635 1245 620 1290 588M1288 580Q1230 600 1230 578 1235 555 1288 580M1290 570Q1240 540 1258 522 1280 520 1290 570',
        'M890 610C905 560 1000 560 1020 605 1050 680 1050 740 1010 765 970 790 930 780 900 750 880 720 880 650 890 610M940 655C920 625 885 650 890 700 900 730 930 710 930 740 935 790 1005 800 1010 740 1005 720 1035 690 1025 655 1010 610 970 620 940 655M945 735 995 725Q990 755 965 753 950 752 945 735M933 685A9 17 0 1 1 915 685 9 17 0 1 1 933 685M1000 665A9 17 0 1 1 982 665 9 17 0 1 1 1000 665M885 620Q845 605 840 660L858 725 878 720 885 620M858 725V800Q870 840 905 828 910 790 880 725M1012 575Q1040 555 1065 610 1075 660 1065 675L1045 680 1010 590M1050 680V750Q1055 785 1090 778 1105 750 1070 675M955 705V710M972 700V705',
        'M1155 765Q1155 750 1170 748L1300 735 1410 678 1418 688 1300 735 1340 930 1215 970Q1200 965 1195 950zM1170 750 1300 735 1430 690Q1440 690 1445 710L1468 885Q1468 900 1455 905L1340 930M1155 765 1170 820 1215 965M1207 810 1270 792 1275 802 1210 822zM1322 750 1330 775 1340 755 1350 770 1358 745M1370 748 1420 735 1423 745 1372 758zM1345 795 1425 775 1430 785 1348 805zM1350 830 1430 810 1432 820 1353 842zM1360 870 1405 858 1405 868 1362 880zM1245 845 1260 842 1262 860 1285 862 1272 880 1280 900 1260 895 1240 908 1235 885 1225 870 1245 865z',
        'M1410 605 1438 588 1550 765Q1550 785 1538 778zM1440 605 1480 640 1465 655M1455 605 1448 620M1470 620 1460 635M1450 455Q1450 445 1570 405 1580 402 1585 415L1612 500Q1610 515 1600 518L1485 550Q1470 550 1465 535zM1495 552 1502 565 1600 538 1605 520M1475 465 1500 460 1508 515 1480 522zM1518 455 1542 450V485L1520 490M1542 485 1548 510 1525 515M1558 440 1578 435V465L1560 475 1565 500 1585 495M1485 305C1430 310 1430 250 1485 280 1435 210 1490 190 1495 275 1540 230 1550 250 1535 300L1495 290 1530 340 1510 355 1495 345 1490 295 1440 352M1400 400 1435 420M1395 435H1425M1395 470 1425 462',
        'M455 970 660 865Q675 865 675 880L665 950 635 1083M415 990Q420 965 445 970L530 1083M415 990 490 1083M563 995A37 42 0 1 1 490 995 37 42 0 1 1 563 995M660 1005A38 43 0 1 1 584 1005 38 43 0 1 1 660 1005M600 985 625 1020M625 985 600 1022M600 1005H635M615 935A12 14 0 1 1 591 935 12 14 0 1 1 615 935M653 927A11 12 0 1 1 631 927 11 12 0 1 1 653 927M555 1083 565 1060 585 1065 600 1058 625 1065',
        'M740 790Q740 782 755 782L810 812Q820 818 818 828L765 980Q750 995 735 995M740 790 702 950Q700 975 715 980M730 855Q765 850 798 880M715 905Q755 905 780 930M705 950Q745 940 768 970M735 985A13 15 0 1 1 710 985 13 15 0 1 1 735 985M760 790 758 805M775 795 770 812M790 802 785 820M803 812 795 828',
        'M955 905Q980 895 988 860 995 830 1015 820L1020 795 1050 800 1040 830 1025 828Q1005 850 1000 880 990 910 965 918zM935 845Q960 830 980 845M938 855 970 858M1010 875 1035 870 1045 858 1068 870 1050 895 1040 885 1015 885M995 945Q995 930 1005 930L1075 925 1105 960 1118 1050 1030 1083 1020 1060zM1060 928 1062 960 1100 955M1045 995 1028 1018 1048 1030M1070 985 1062 1035M1080 985 1095 1000 1085 1025M790 975Q830 980 840 1010 835 1045 810 1040 795 1010 790 975M825 1045 845 1083M840 1038 860 1078M685 1083V1060L745 1025 765 1075 785 1083M930 1083 935 1060 955 1050 980 1062 985 1083M1195 1083Q1205 1050 1230 1055L1235 1035 1252 1055 1230 1075',
        'M145 1070 160 1055 255 1005Q260 970 285 990 310 1030 310 1083M255 1005Q245 1040 260 1083M275 995Q265 1040 275 1083M185 1055 190 1083M0 1040Q15 970 65 1030L90 1045 95 1083M0 1000Q40 970 70 1030M600 700 715 718 690 790 675 800zM715 718 700 755 662 735 690 780M1367 1020 1400 1025 1410 1005 1440 1010 1450 1030 1515 1040V1055L1435 1045 1415 1058 1400 1042 1370 1035zM1540 958A39 44 0 1 1 1462 958 39 44 0 1 1 1540 958M1488 940 1520 950 1510 960 1518 972 1505 978 1500 968 1490 975z',
        'M380 0Q380 70 410 78L455 72Q470 50 435 45L415 25 410 10M500 0 505 60Q515 80 560 70 580 55 570 35L545 40 530 10M735 15 785 50 835 5M300 5 310 25 345 0'],
    i: 'pencil 660 103 32 -50;love 1221 95 26 -8;heart 105 97 13 10;heart 885 393 14;heart 57 588 13;heart 147 872 10;bell 172 180 20 18;star 181 288 12 10;star 291 517 11 10;star 735 648 16 15;spark 870 188 10;spark 1133 192 10;spark 345 967 13;spark 897 1000 12;spark 1502 804 10;bolt 103 363 17;compass 178 560 26;mic 940 483 19;chat 342 712 43 -8;chat 440 830 45 -8;music 793 715 12;cloud 867 908 19;cloud 188 967 18;gear 44 915 14;drop 187 53 9;o 78 11 6;o 34 256 3;o 55 203 6;o 114 261 5;o 52 303 4;o 6 224 6;o 255 63 3;o 319 64 5;o 162 407 4;o 217 444 5;o 266 453 4;o 54 458 5;o 85 494 5;o 44 517 4;o 11 543 5;o 15 648 4;o 111 650 2;o 283 601 5;o 315 617 4;o 357 620 3;o 263 644 5;o 184 692 3;o 170 751 7;o 132 787 4;o 181 808 4;o 221 818 4;o 85 846 4;o 274 837 7;o 220 871 4;o 245 903 5;o 288 906 5;o 106 958 6;o 376 1031 5;o 407 932 4;o 441 922 5;o 479 926 4;o 497 669 8;o 549 656 5;o 591 650 4;o 629 652 6;o 661 630 4;o 509 721 4;o 548 730 5;o 597 764 4;o 605 845 6;o 625 807 3;o 704 817 3;o 588 542 4;o 600 579 4;o 643 587 6;o 756 586 4;o 805 598 6;o 863 565 4;o 767 461 4;o 743 486 4;o 789 492 4;o 702 150 5;o 614 19 4;o 618 60 4;o 676 9 4;o 946 17 4;o 889 91 5;o 930 71 6;o 1060 40 5;o 1106 71 6;o 1095 106 4;o 1122 132 4;o 1076 144 4;o 915 142 3;o 849 255 3;o 875 277 4;o 873 312 4;o 1008 407 3;o 1006 477 5;o 1040 517 5;o 1000 529 7;o 1155 302 3;o 1317 230 4;o 1362 288 4;o 1412 283 4;o 1417 240 4;o 1380 331 6;o 1305 173 6;o 1207 402 4;o 1213 454 4;o 1248 450 5;o 1291 431 5;o 1343 423 4;o 1201 488 4;o 1477 384 3;o 1409 517 3;o 1436 554 5;o 1478 600 3;o 1190 632 4;o 1157 661 4;o 1125 692 5;o 1161 712 4;o 1196 695 6;o 1231 703 3;o 1118 798 3;o 1109 847 5;o 1140 867 4;o 1152 955 7;o 943 961 3;o 975 1005 5;o 1146 1008 4;o 1194 1010 5;o 1160 1060 4;o 1285 1028 6;o 1327 1053 5;o 1312 975 3;o 1347 988 3;o 1394 960 5;o 1427 945 3;o 1510 875 5;o 1532 620 5;o 1524 663 4' },
  // controller, cat, croissant, flip-flops, key
  { o: [0, 830], s: [.523, .3333],
    p: ['M1075 190Q1055 130 1085 130L1090 150Q1115 150 1120 190 1110 220 1090 210zM1120 165 1145 120Q1150 80 1155 80 1170 120 1160 180L1180 110Q1195 105 1190 150L1165 200 1205 150Q1210 165 1175 230L1140 285M1075 200Q1060 260 1075 285M1070 300Q1065 280 1085 288L1130 290Q1145 300 1130 340H1090Q1065 335 1070 300',
        'M1190 0C1180 80 1210 120 1240 122 1290 120 1310 60 1300 0M1240 122 1255 160 1250 210Q1260 225 1280 210L1285 170 1310 140Q1335 130 1330 190 1350 195 1360 180 1370 90 1350 0M1280 190Q1300 200 1290 210M1230 35A8 12 0 1 1 1214 35 8 12 0 1 1 1230 35M1275 25A8 12 0 1 1 1259 25 8 12 0 1 1 1275 25M1240 60 1250 70 1260 55M1310 55 1345 60',
        'M1160 335C1180 270 1210 220 1240 240 1270 280 1340 270 1342 320L1335 460Q1320 540 1290 515 1280 460 1245 440 1200 400 1170 445 1130 430 1160 335M1205 275 1220 268 1228 290 1240 300 1230 315 1225 335 1210 325 1198 310 1205 295zM1255 335 1265 310 1270 318 1262 340zM1290 320A8 11 0 1 1 1274 320 8 11 0 1 1 1290 320M1318 322A8 11 0 1 1 1302 322 8 11 0 1 1 1318 322M1222 370A11 16 0 1 1 1200 370 11 16 0 1 1 1222 370M1285 400A11 18 0 1 1 1263 400 11 18 0 1 1 1285 400',
        'M1030 640C1040 580 1075 560 1095 580 1125 600 1125 670 1090 705 1060 720 1035 690 1030 640M1095 580 1118 548Q1125 600 1110 610M1070 580Q1090 550 1115 550M1030 660Q1000 700 1015 715L1045 718 1070 710M1015 690 1035 700M1165 500 1145 610Q1180 650 1210 640L1230 560M1162 500Q1190 490 1228 545 1200 560 1162 500M1215 580Q1245 590 1230 620 1215 635 1208 615M1180 480Q1165 430 1200 430 1240 440 1225 465L1205 470 1200 490M1285 650C1270 580 1300 560 1340 540 1380 500 1400 480 1400 545 1400 600 1385 640 1330 670 1285 650M1295 640V615L1335 610V650M1340 610 1345 575 1395 570M1310 655 1280 735 1295 730 1325 660M1340 655 1348 760 1358 745 1355 655M1365 650 1390 740 1398 730 1380 645',
        'M1205 760Q1220 650 1245 665 1270 690 1250 740 1230 820 1210 820 1200 790 1205 760M1210 745 1225 700 1248 750M1140 790Q1135 740 1160 738 1180 750 1185 800 1210 870 1190 890 1170 880 1140 790M1150 830 1160 780 1190 820M1495 655 1505 665 1490 740Q1515 780 1490 825 1450 820 1440 780L1475 735 1485 660zM1475 795A8 12 0 1 1 1461 795 8 12 0 1 1 1475 795',
        'M1400 65 1490 50 1485 155 1405 165zM1415 90 1465 85V95L1415 102zM1418 115 1450 110V120L1418 127zM1435 1050Q1445 980 1480 990L1510 1030Q1525 1060 1515 1083M1445 1035Q1460 980 1505 1035zM1430 1083V1040M1180 1050 1225 1043 1235 1083M1160 1083C1080 1060 1090 890 1150 885 1210 890 1220 960 1230 1040 1200 1083 1180 1083M1110 1010Q1140 950 1145 920 1165 960 1205 940M1130 1000h1M1170 985h1M1145 1035Q1165 1040 1175 1020'],
    i: 'camera 1067 812 26 -8;star 1420 650 13 10;star 1195 975 12;star 1427 925 13;star 1440 10 12;spark 1370 295 10;cocktail 1290 970 32 15;mic 1449 370 27;drop 1326 1020 9;o 1050 60 4;o 1040 225 6;o 1015 180 4;o 1004 135 4;o 1037 304 3;o 1129 695 4;o 1152 673 4;o 1173 690 4;o 1191 680 3;o 1125 737 3;o 1268 810 7;o 1244 837 4;o 1309 795 3;o 1363 827 3;o 1225 913 4;o 1389 779 4;o 1420 790 4;o 1422 853 6;o 1428 720 5;o 1438 582 4;o 1427 516 5;o 1395 443 4;o 1417 267 4;o 1385 178 3;o 1390 214 4;o 1412 211 3;o 1432 198 3;o 1327 243 6;o 1295 256 3;o 1408 37 3;o 1388 10 4;o 1411 1004 4' }
];

const el = (name, attrs, parent) => {
  const node = document.createElementNS('http://www.w3.org/2000/svg', name);
  for (const key in attrs) node.setAttribute(key, attrs[key]);
  return parent.appendChild(node);
};
const root = document.getElementById('wallpaper');
const tile = el('g', { id: 'doodle-tile' }, root);
for (const { o, s, p, i } of regions) {
  const shapes = el('g', { transform: `translate(${o}) scale(${s})` }, tile);
  p.forEach(d => el('path', { d }, shapes));
  i.split(';').forEach(entry => {
    const [kind, x, y, size, angle = 0] = entry.split(' ');
    const cx = o[0] + x * s[0], cy = o[1] + y * s[1];
    if (kind === 'o') el('circle', { cx, cy, r: size }, tile);
    else el('path', { d: stamps[kind], transform: `translate(${cx} ${cy}) rotate(${angle}) scale(${size})` }, tile);
  });
}
[-825, 825, 1650].forEach(x => el('use', { href: '#doodle-tile', x }, root));
```
